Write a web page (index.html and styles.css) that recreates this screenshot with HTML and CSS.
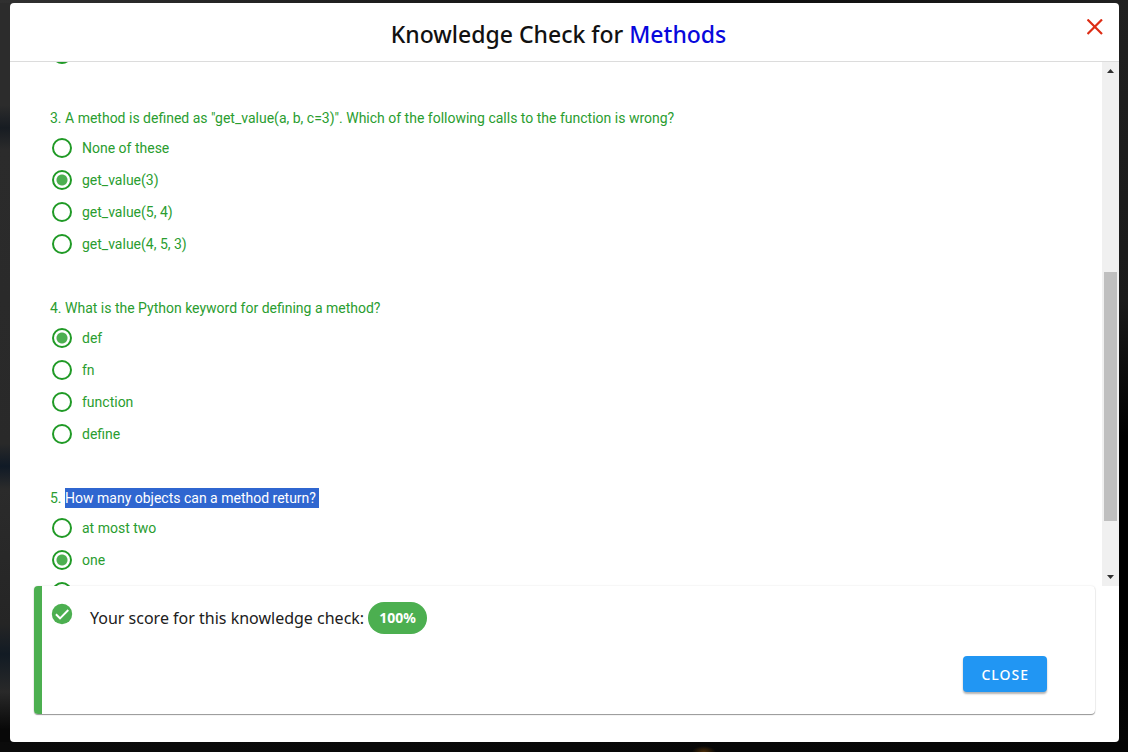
FILE: index.html
```html
<!DOCTYPE html>
<html lang="en">
<head>
<meta charset="utf-8">
<title>Knowledge Check for Methods</title>
<link rel="stylesheet" href="styles.css">
</head>
<body>
<main class="dialog" role="dialog" aria-labelledby="dialog-title">
  <header class="dialog-header">
    <h1 class="dialog-title" id="dialog-title">Knowledge Check for <span class="topic">Methods</span></h1>
    <button class="dismiss" type="button" aria-label="Dismiss">
      <svg width="16" height="16" viewBox="0 0 16 16" fill="none" stroke="#dd2c14" stroke-width="2.2" aria-hidden="true"><path d="M.5.5 15 15M15 .5.5 15"/></svg>
    </button>
  </header>
  <div class="dialog-body">
    <form class="questions">
      <fieldset class="question">
        <label class="option"><input class="radio" type="radio" name="q2" aria-label="Question 2, last option"></label>
      </fieldset>
      <fieldset class="question">
        <legend class="prompt">3. A method is defined as "get_value(a, b, c=3)". Which of the following calls to the function is wrong?</legend>
        <label class="option"><input class="radio" type="radio" name="q3">None of these</label>
        <label class="option"><input class="radio" type="radio" name="q3" checked>get_value(3)</label>
        <label class="option"><input class="radio" type="radio" name="q3">get_value(5, 4)</label>
        <label class="option"><input class="radio" type="radio" name="q3">get_value(4, 5, 3)</label>
      </fieldset>
      <fieldset class="question">
        <legend class="prompt">4. What is the Python keyword for defining a method?</legend>
        <label class="option"><input class="radio" type="radio" name="q4" checked>def</label>
        <label class="option"><input class="radio" type="radio" name="q4">fn</label>
        <label class="option"><input class="radio" type="radio" name="q4">function</label>
        <label class="option"><input class="radio" type="radio" name="q4">define</label>
      </fieldset>
      <fieldset class="question">
        <legend class="prompt">5. <span class="selected">How many objects can a method return? </span></legend>
        <label class="option"><input class="radio" type="radio" name="q5">at most two</label>
        <label class="option"><input class="radio" type="radio" name="q5" checked>one</label>
        <label class="option"><input class="radio" type="radio" name="q5" aria-label="Question 5, third option"></label>
      </fieldset>
    </form>
    <div class="scrollbar" aria-hidden="true">
      <svg class="arrow" width="7" height="4" viewBox="0 0 7 4"><path d="M0 4 3.5 0 7 4Z" fill="#303030"/></svg>
      <div class="track"><div class="thumb"></div></div>
      <svg class="arrow" width="7" height="4" viewBox="0 0 7 4"><path d="M0 0 3.5 4 7 0Z" fill="#303030"/></svg>
    </div>
  </div>
  <section class="result">
    <div class="score">
      <svg class="check" width="24" height="24" viewBox="0 0 24 24" aria-hidden="true"><circle cx="12" cy="12" r="10.2" fill="#4caf50"/><path d="M5.9 12.3 10 16.3 18.3 8" fill="none" stroke="#fff" stroke-width="1.9"/></svg>
      <p class="score-text">Your score for this knowledge check: <strong class="badge">100%</strong></p>
    </div>
    <button class="close" type="button">CLOSE</button>
  </section>
</main>
</body>
</html>
```
FILE: styles.css
```css
* { box-sizing: border-box; }

body {
  display: flex;
  height: 100vh;
  margin: 0;
  padding: 3px 9px 10px 10px;
  font-family: "Noto Sans", "Open Sans", sans-serif;
  background:
    radial-gradient(ellipse 12px 6px at 62.4% 100%, #4a2c08, transparent),
    linear-gradient(90deg, #0b0b0b, #050505) bottom / 100% 10px no-repeat,
    linear-gradient(90deg, #303030, #151515 50%, #0a0a0a 60%, #202020) top / 100% 3px no-repeat,
    linear-gradient(#2c2c2c 14%, #171c22 17%, #2b2b2b 20%, #292929 59%, #101a26 62%, #2b2b2b 65%, #252525 83%, #121b24 87%, #292929 92%, #080808 97%) left / 50% 100% no-repeat,
    linear-gradient(#202020, #1a1a1a 40%, #000 58%, #000 85%, #060606) right / 50% 100% no-repeat;
}

.dialog {
  display: flex;
  flex: 1;
  flex-direction: column;
  min-width: 0;
  padding-bottom: 28px;
  overflow: hidden;
  background: #fff;
  border-radius: 4px;
}

.dialog-header {
  display: grid;
  grid-template-columns: 48px 1fr 48px;
  align-items: center;
  padding: 14px 0 10px;
  border-bottom: 1px solid #dcdcdc;
}

.dialog-title {
  grid-column: 2;
  margin: 0;
  padding-right: 12px;
  font-size: 23px;
  font-weight: 500;
  line-height: 34px;
  text-align: center;
  color: #111;
}

.topic { color: #0808dc; }

.dismiss {
  align-self: start;
  justify-self: center;
  padding: 2px;
  line-height: 0;
  background: none;
  border: 0;
}

.dialog-body {
  display: flex;
  flex: 1;
  min-height: 0;
  overflow: hidden;
}

.questions {
  flex: 1;
  min-width: 0;
  margin-top: -24px;
  padding: 0 40px;
  overflow: hidden;
  font-family: Roboto, "Noto Sans", sans-serif;
  font-size: 14px;
  color: #2a9d2f;
}

.question {
  margin: 0 0 38px;
  padding: 0;
  border: 0;
}

.prompt {
  margin-bottom: 4px;
  padding: 0;
  line-height: 20px;
}

.selected {
  display: inline-block;
  padding-right: 3px;
  color: #fff;
  background: #2f66d0;
}

.option {
  display: flex;
  gap: 10px;
  align-items: center;
  height: 32px;
  padding-left: 2px;
}

.radio {
  flex: none;
  width: 20px;
  height: 20px;
  margin: 0;
  appearance: none;
  border: 2px solid #209a26;
  border-radius: 50%;
}

.radio:checked {
  background: radial-gradient(circle, #4caf50 5px, transparent 6px);
}

.scrollbar {
  display: flex;
  flex: none;
  flex-direction: column;
  gap: 6px;
  align-items: center;
  width: 17px;
  padding: 7px 0;
  background: #f0f0f0;
}

.arrow { flex: none; }

.track {
  display: grid;
  flex: 1;
  grid-template-rows: 193fr 249fr 48fr;
  width: 13px;
}

.thumb {
  grid-row: 2;
  background: #bfbfbf;
}

.result {
  display: flex;
  flex-direction: column;
  gap: 22px;
  margin: 0 24px;
  padding: 16px 48px 22px 8px;
  border-left: 8px solid #4caf50;
  border-radius: 4px;
  box-shadow: 0 1px 1px rgba(0, 0, 0, .4), 0 0 2px rgba(0, 0, 0, .12);
}

.score {
  display: flex;
  gap: 16px;
  align-items: flex-start;
}

.check { flex: none; }

.score-text {
  margin: 0;
  font-size: 16px;
  line-height: 32px;
  color: #202020;
}

.badge {
  display: inline-block;
  padding: 0 11px;
  font-size: 14px;
  line-height: 32px;
  vertical-align: top;
  color: #fff;
  background: #4caf50;
  border-radius: 16px;
}

.close {
  align-self: flex-end;
  height: 36px;
  padding: 0 18px;
  font-family: inherit;
  font-size: 14px;
  font-weight: 500;
  letter-spacing: 1px;
  color: #fff;
  background: #2196f3;
  border: 0;
  border-radius: 4px;
  box-shadow: 0 2px 2px rgba(0, 0, 0, .3);
}
```
